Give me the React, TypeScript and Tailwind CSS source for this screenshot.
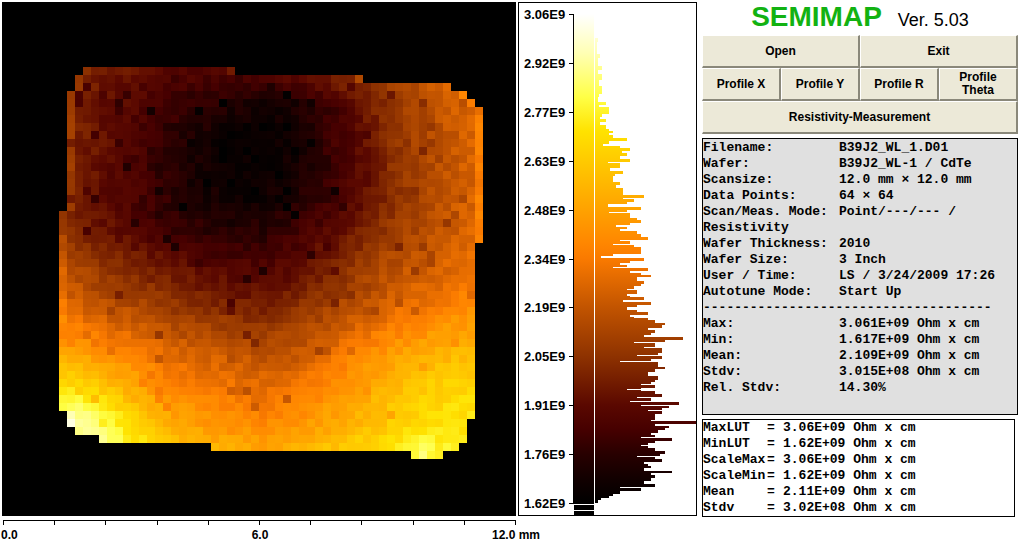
import React from "react";

type Stop = [number, number, number, number];

// Look-up table: position (0-100) followed by r, g, b
const LUT: Stop[] = [
  [0, 0, 0, 0],
  [5, 18, 0, 0],
  [10, 40, 0, 0],
  [15, 70, 0, 0],
  [20, 90, 8, 0],
  [30, 142, 50, 0],
  [40, 194, 84, 0],
  [50, 250, 122, 0],
  [53, 255, 134, 0],
  [60, 255, 162, 0],
  [70, 255, 202, 0],
  [76, 255, 226, 0],
  [83, 255, 255, 70],
  [92, 255, 255, 180],
  [100, 255, 255, 255],
];

// Wafer outline: first row, last row, first column, end column
const OUTLINE = [
  [8, 8, 10, 29],
  [9, 9, 9, 45],
  [10, 10, 9, 56],
  [11, 11, 8, 58],
  [12, 12, 8, 59],
  [13, 25, 8, 60],
  [26, 29, 7, 60],
  [30, 50, 7, 59],
  [51, 51, 8, 59],
  [52, 52, 8, 58],
  [53, 53, 9, 58],
  [54, 54, 12, 58],
  [55, 55, 26, 57],
  [56, 56, 51, 55],
];

// Measured level on every fourth data point, starting at 8 / 8
const FIELD = [
  [28, 24, 24, 20, 17, 17, 19, 22, 27, 32, 37, 41, 45, 48],
  [27, 21, 18, 14, 11, 8, 6, 7, 13, 22, 31, 37, 43, 48],
  [27, 22, 17, 11, 7, 3, 2, 5, 12, 20, 29, 36, 41, 46],
  [26, 21, 16, 10, 5, 2, 2, 5, 11, 19, 29, 36, 41, 46],
  [25, 20, 16, 11, 7, 4, 4, 8, 13, 20, 29, 35, 41, 46],
  [28, 23, 18, 14, 11, 9, 10, 13, 19, 26, 32, 37, 42, 48],
  [37, 29, 26, 22, 19, 17, 16, 19, 25, 31, 37, 41, 45, 49],
  [42, 36, 33, 29, 26, 23, 22, 26, 31, 36, 42, 46, 50, 53],
  [51, 46, 43, 38, 35, 33, 32, 34, 39, 45, 50, 54, 58, 60],
  [63, 58, 53, 47, 44, 42, 40, 42, 48, 55, 60, 64, 66, 67],
  [77, 71, 62, 55, 51, 49, 47, 50, 55, 60, 66, 71, 73, 75],
  [94, 85, 73, 63, 58, 55, 53, 56, 60, 65, 70, 75, 76, 77],
  [100, 96, 82, 71, 67, 65, 63, 65, 70, 74, 78, 85, 79, 77],
];

// Histogram steps: y, bar length
const HISTOGRAM = [
  [38, 3], [42, 2], [54, 5], [58, 3], [66, 7], [70, 3], [74, 7], [80, 4],
  [86, 7], [94, 4], [97, 3], [102, 11], [105, 4], [107, 14], [114, 7],
  [117, 5], [119, 11], [122, 5], [125, 11], [129, 14], [131, 18], [133, 14],
  [135, 18], [138, 32], [141, 14], [144, 8], [146, 25], [148, 35], [151, 27],
  [153, 32], [156, 25], [159, 35], [162, 13], [163, 25], [168, 15], [171, 28],
  [174, 20], [176, 18], [182, 25], [185, 21], [188, 28], [195, 49], [198, 28],
  [199, 39], [202, 32], [204, 13], [207, 46], [210, 32], [212, 14], [213, 35],
  [218, 42], [220, 46], [223, 35], [225, 21], [227, 32], [229, 25], [231, 42],
  [234, 46], [237, 53], [240, 25], [241, 35], [244, 18], [245, 39], [247, 46],
  [254, 18], [256, 6], [258, 49], [261, 35], [263, 25], [265, 32], [267, 18],
  [268, 53], [271, 35], [273, 46], [275, 56], [277, 42], [281, 49], [284, 46],
  [286, 39], [289, 32], [290, 42], [294, 32], [296, 35], [297, 49], [300, 28],
  [302, 56], [305, 42], [307, 32], [310, 42], [312, 53], [315, 35], [317, 39],
  [318, 53], [320, 60], [323, 70], [325, 67], [328, 53], [330, 60], [333, 56],
  [335, 49], [337, 88], [340, 70], [342, 39], [343, 60], [347, 49], [348, 67],
  [353, 63], [355, 42], [356, 67], [359, 56], [361, 25], [362, 63], [367, 70],
  [369, 60], [372, 53], [376, 63], [380, 60], [382, 56], [384, 46], [385, 60],
  [388, 46], [389, 32], [390, 46], [391, 60], [394, 67], [397, 42], [398, 56],
  [401, 35], [402, 84], [405, 46], [406, 74], [408, 67], [410, 53], [411, 67],
  [414, 60], [420, 56], [421, 101], [424, 60], [426, 74], [428, 70], [430, 63],
  [433, 56], [435, 60], [437, 46], [438, 77], [441, 60], [443, 53], [445, 46],
  [446, 53], [448, 60], [451, 70], [454, 65], [456, 42], [457, 60], [459, 67],
  [462, 49], [464, 53], [466, 56], [468, 49], [471, 77], [473, 56], [475, 60],
  [478, 56], [481, 49], [484, 60], [487, 25], [488, 46], [491, 25], [494, 18],
  [496, 14], [498, 6], [500, 3], [503, 0],
];

const SCALE = [
  "3.06E9", "2.92E9", "2.77E9", "2.63E9", "2.48E9", "2.34E9",
  "2.19E9", "2.05E9", "1.91E9", "1.76E9", "1.62E9",
];

const SCAN_INFO = [
  ["Filename:", "B39J2_WL_1.D01"],
  ["Wafer:", "B39J2_WL-1 / CdTe"],
  ["Scansize:", "12.0 mm × 12.0 mm"],
  ["Data Points:", "64 × 64"],
  ["Scan/Meas. Mode:", "Point/---/--- /"],
  ["Resistivity", ""],
  ["Wafer Thickness:", "2010"],
  ["Wafer Size:", "3 Inch"],
  ["User / Time:", "LS / 3/24/2009 17:26"],
  ["Autotune Mode:", "Start Up"],
];

const RESULTS = [
  ["Max:", "3.061E+09 Ohm x cm"],
  ["Min:", "1.617E+09 Ohm x cm"],
  ["Mean:", "2.109E+09 Ohm x cm"],
  ["Stdv:", "3.015E+08 Ohm x cm"],
  ["Rel. Stdv:", "14.30%"],
];

const LUT_INFO = [
  ["MaxLUT", "3.06E+09 Ohm x cm"],
  ["MinLUT", "1.62E+09 Ohm x cm"],
  ["ScaleMax", "3.06E+09 Ohm x cm"],
  ["ScaleMin", "1.62E+09 Ohm x cm"],
  ["Mean", "2.11E+09 Ohm x cm"],
  ["Stdv", "3.02E+08 Ohm x cm"],
];

const lutColor = (value: number) => {
  const v = Math.max(0, Math.min(100, value));
  const i = Math.max(1, LUT.findIndex((stop) => stop[0] >= v));
  const a = LUT[i - 1];
  const b = LUT[i];
  const t = (v - a[0]) / (b[0] - a[0]);
  const mix = (n: number) => Math.round(a[n] + (b[n] - a[n]) * t);
  return `rgb(${mix(1)},${mix(2)},${mix(3)})`;
};

const noise = (x: number, y: number) => {
  let h = (Math.imul(x, 374761393) + Math.imul(y, 668265263)) | 0;
  h = Math.imul(h ^ (h >>> 13), 1274126177);
  h = Math.imul(h ^ (h >>> 15), 2246822519);
  return ((h ^ (h >>> 16)) >>> 0) / 4294967296;
};

const levelAt = (col: number, row: number) => {
  const fx = Math.max(0, (col - 8) / 4);
  const fy = (row - 8) / 4;
  const x = Math.min(12, Math.floor(fx));
  const y = Math.min(11, Math.floor(fy));
  const tx = fx - x;
  const ty = fy - y;
  const top = FIELD[y][x] * (1 - tx) + FIELD[y][x + 1] * tx;
  const bottom = FIELD[y + 1][x] * (1 - tx) + FIELD[y + 1][x + 1] * tx;
  let level = top * (1 - ty) + bottom * ty;
  level += (noise(col, row) - 0.5) * 6;
  // single points that drop below their neighbours
  if (noise(col + 91, row + 37) > 0.96) level -= 7;
  return level;
};

const cells = OUTLINE.flatMap(([first, last, start, end]) => {
  const list: { col: number; row: number; fill: string }[] = [];
  for (let row = first; row <= last; row++) {
    for (let col = start; col < end; col++) {
      const edge = (col === start && row < 40) || (col === end - 1 && row < 30);
      const level = levelAt(col, row) + (edge ? 6 : 0);
      list.push({ col, row, fill: lutColor(level) });
    }
  }
  return list;
});

const histogramPath =
  HISTOGRAM.map(([y, length], i) =>
    i === 0 ? `M77 ${y - 2}H${77 + length}` : `V${y - 2}H${77 + length}`
  ).join("") + "Z";

function WaferMap() {
  return (
    <svg
      viewBox="0 0 514 514"
      className="block w-full bg-black"
      shapeRendering="crispEdges"
      role="img"
      aria-label="Resistivity map"
    >
      {cells.map(({ col, row, fill }) => (
        <rect
          key={`${col}-${row}`}
          x={1 + col * 8}
          y={1 + row * 8}
          width="8"
          height="8"
          fill={fill}
        />
      ))}
    </svg>
  );
}

function MapAxis() {
  const ticks = Array.from({ length: 11 }, (_, i) => Math.round(1 + i * 51.2));
  return (
    <svg
      viewBox="0 0 514 28"
      className="block w-full overflow-visible text-[12px] font-bold"
    >
      <path
        d={"M1 4.5H514" + ticks.map((x) => `M${x + 0.5} 4V9`).join("")}
        stroke="#000"
        fill="none"
        shapeRendering="crispEdges"
      />
      <text x="-1" y="23">0.0</text>
      <text x="258" y="23" textAnchor="middle">6.0</text>
      <text x="490" y="23">12.0 mm</text>
    </svg>
  );
}

function Histogram() {
  return (
    <svg
      viewBox="0 0 179 514"
      className="block w-full text-[13px] font-bold"
      role="img"
      aria-label="Histogram"
    >
      <defs>
        <linearGradient
          id="lut"
          gradientUnits="userSpaceOnUse"
          x1="0"
          y1="501"
          x2="0"
          y2="12"
        >
          {LUT.map(([pos]) => (
            <stop key={pos} offset={pos / 100} stopColor={lutColor(pos)} />
          ))}
        </linearGradient>
      </defs>
      <g shapeRendering="crispEdges">
        <rect x="56" y="12" width="20" height="490" fill="url(#lut)" />
        <rect x="56" y="503" width="20" height="5" />
        <rect x="56" y="509" width="20" height="5" />
        <path d={histogramPath} fill="url(#lut)" />
        <path d="M55.5 12V502" stroke="#000" />
        {SCALE.map((label, i) => (
          <path
            key={label}
            d={`M51 ${12.5 + Math.round(i * 48.9)}H56`}
            stroke="#000"
          />
        ))}
        <rect x="0.5" y="0.5" width="178" height="513" fill="none" stroke="#000" />
      </g>
      {SCALE.map((label, i) => (
        <text key={label} x="6" y={17 + Math.round(i * 48.9)}>
          {label}
        </text>
      ))}
    </svg>
  );
}

function PanelButton({
  className,
  children,
}: {
  className: string;
  children: React.ReactNode;
}) {
  return (
    <button
      type="button"
      className={`${className} flex h-[33px] items-center justify-center border-r-2 border-b-2 border-t border-l border-t-white border-l-white border-r-[#8a887a] border-b-[#8a887a] bg-[#ece9d8] text-[12px] leading-[13px] font-bold`}
    >
      {children}
    </button>
  );
}

function InfoRows({ rows }: { rows: string[][] }) {
  return (
    <dl>
      {rows.map(([label, value]) => (
        <div key={label} className="flex">
          <dt className="w-[136px] shrink-0 whitespace-nowrap">{label}</dt>
          <dd className="whitespace-nowrap">{value}</dd>
        </div>
      ))}
    </dl>
  );
}

export default function App() {
  return (
    <main className="grid grid-cols-[514fr_179fr_319fr] items-start gap-[2px] bg-white pt-[2px] pr-px pl-[2px] font-['Liberation_Sans',Arial,sans-serif] text-black">
      {/* Wafer map */}
      <section className="min-w-0">
        <WaferMap />
        <MapAxis />
      </section>

      {/* Scale and histogram */}
      <section className="min-w-0">
        <Histogram />
      </section>

      {/* Controls and measurement data */}
      <section className="min-w-0 pl-[3px]">
        <header className="flex h-[33px] items-baseline justify-center gap-4">
          <h1 className="text-[28px] leading-[30px] font-bold text-[#12b212]">
            SEMIMAP
          </h1>
          <span className="text-[18px]">Ver. 5.03</span>
        </header>

        <div className="grid grid-cols-4">
          <PanelButton className="col-span-2">Open</PanelButton>
          <PanelButton className="col-span-2">Exit</PanelButton>
          <PanelButton className="col-span-1">Profile X</PanelButton>
          <PanelButton className="col-span-1">Profile Y</PanelButton>
          <PanelButton className="col-span-1">Profile R</PanelButton>
          <PanelButton className="col-span-1">
            Profile
            <br />
            Theta
          </PanelButton>
          <PanelButton className="col-span-4">Resistivity-Measurement</PanelButton>
        </div>

        <div className="mt-1 border border-black bg-[#e0e0e0] pt-px pb-[18px] font-['Liberation_Mono',monospace] text-[13px] leading-4 font-bold">
          <InfoRows rows={SCAN_INFO} />
          <p className="overflow-hidden whitespace-nowrap">{"-".repeat(37)}</p>
          <InfoRows rows={RESULTS} />
        </div>

        <dl className="mt-1 mr-[3px] border border-black bg-white font-['Liberation_Mono',monospace] text-[13px] leading-4 font-bold">
          {LUT_INFO.map(([label, value]) => (
            <div key={label} className="flex">
              <dt className="w-16 shrink-0">{label}</dt>
              <dd className="flex whitespace-nowrap">
                <span className="w-4">=</span>
                {value}
              </dd>
            </div>
          ))}
        </dl>
      </section>
    </main>
  );
}
